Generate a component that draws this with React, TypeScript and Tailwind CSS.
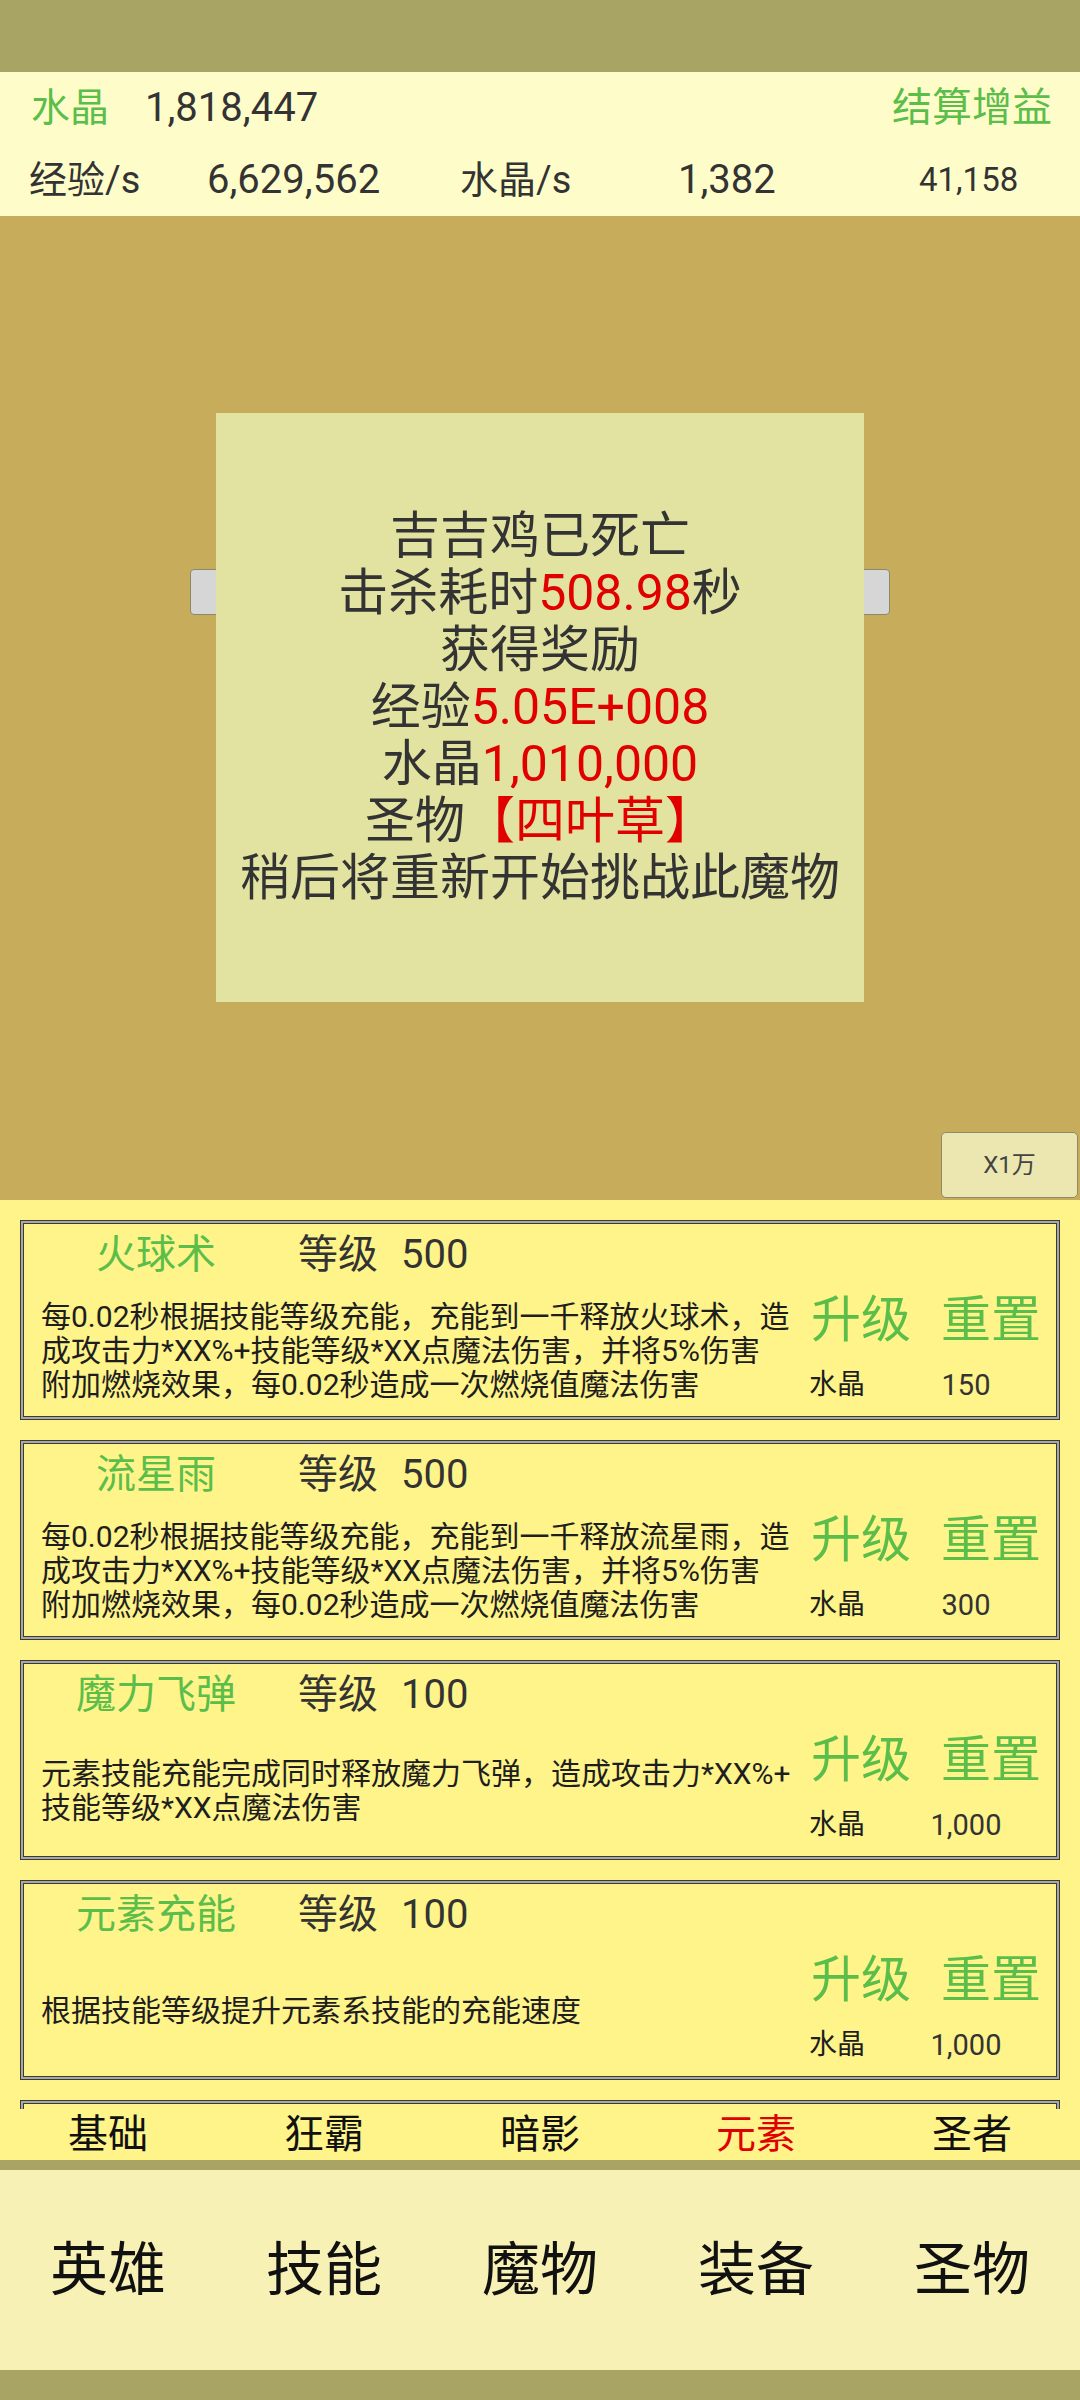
import React from 'react';

const FONT = { fontFamily: 'Roboto, "Noto Sans CJK SC", sans-serif' };

type Skill = {
  name: string;
  level: number;
  desc: string[];
  cost: string;
};

const SKILLS: Skill[] = [
  {
    name: '火球术',
    level: 500,
    desc: [
      '每0.02秒根据技能等级充能，充能到一千释放火球术，造',
      '成攻击力*XX%+技能等级*XX点魔法伤害，并将5%伤害',
      '附加燃烧效果，每0.02秒造成一次燃烧值魔法伤害',
    ],
    cost: '150',
  },
  {
    name: '流星雨',
    level: 500,
    desc: [
      '每0.02秒根据技能等级充能，充能到一千释放流星雨，造',
      '成攻击力*XX%+技能等级*XX点魔法伤害，并将5%伤害',
      '附加燃烧效果，每0.02秒造成一次燃烧值魔法伤害',
    ],
    cost: '300',
  },
  {
    name: '魔力飞弹',
    level: 100,
    desc: ['元素技能充能完成同时释放魔力飞弹，造成攻击力*XX%+', '技能等级*XX点魔法伤害'],
    cost: '1,000',
  },
  {
    name: '元素充能',
    level: 100,
    desc: ['根据技能等级提升元素系技能的充能速度'],
    cost: '1,000',
  },
];

const SUB_TABS = ['基础', '狂霸', '暗影', '元素', '圣者'];
const MAIN_TABS = ['英雄', '技能', '魔物', '装备', '圣物'];

const CardFrame = ({ children }: { children?: React.ReactNode }) => (
  <div className="h-[200px] border border-[#3a3a3a] bg-[#a9a9a2] p-[2px] shrink-0">
    <div className="h-full border border-[#3a3a3a] bg-[#fef48a] flex flex-col">{children}</div>
  </div>
);

const SkillCard = ({ skill }: { skill: Skill }) => (
  <CardFrame>
    {/* title row */}
    <div className="h-[62px] flex items-center">
      <span className="w-[264px] text-center text-[40px] leading-none text-[#5bbd4a]">{skill.name}</span>
      <span className="ml-[10px] text-[40px] leading-none text-[#333]">等级</span>
      <span className="ml-[23px] text-[40px] leading-none text-[#333]">{skill.level}</span>
    </div>
    {/* body */}
    <div className="flex-1 flex">
      <div className="w-[787px] pl-[17px] flex flex-col justify-center text-[30px] leading-[34px] text-[#1e1e1e]">
        {skill.desc.map((line) => (
          <div key={line} className="whitespace-nowrap">
            {line}
          </div>
        ))}
      </div>
      <div className="flex-1 flex flex-col">
        <div className="h-[68px] flex items-center">
          <span className="text-[50px] leading-none text-[#5bbd4a]">升级</span>
          <span className="ml-[30px] text-[50px] leading-none text-[#5bbd4a]">重置</span>
        </div>
        <div className="h-[62px] flex items-center">
          <span className="-ml-[2px] text-[28px] leading-none text-[#1e1e1e]">水晶</span>
          <span className="ml-[44px] w-[114px] text-center text-[29px] leading-none text-[#333]">{skill.cost}</span>
        </div>
      </div>
    </div>
  </CardFrame>
);

export default function App() {
  return (
    <div className="w-[1080px] h-[2400px] flex flex-col overflow-hidden" style={FONT}>
      {/* status strip */}
      <div className="h-[72px] bg-[#a8a463]" />

      {/* header */}
      <div className="h-[144px] bg-[#fefdca] flex flex-col text-[38px] text-[#333]">
        <div className="h-[72px] flex items-center pl-[31px] pr-[28px]">
          <span className="text-[39px] text-[#5bbd4a]">水晶</span>
          <span className="ml-[36px] text-[40px]">1,818,447</span>
          <span className="ml-auto text-[40px] text-[#5bbd4a]">结算增益</span>
        </div>
        <div className="h-[72px] flex items-center pl-[29px]">
          <span className="w-[178px]">经验/s</span>
          <span className="w-[253px] text-[40px]">6,629,562</span>
          <span className="w-[218px]">水晶/s</span>
          <span className="w-[241px] text-[40px]">1,382</span>
          <span className="text-[33px]">41,158</span>
        </div>
      </div>

      {/* battle scene */}
      <div className="relative h-[984px] bg-[#c7ad5b] flex flex-col items-center">
        {/* side tabs peeking from behind the dialog */}
        <div className="absolute left-[190px] top-[353px] w-[700px] h-[46px] rounded-[4px] border border-[#8c8a6a] bg-[#d6d6d6]" />
        <div className="relative mt-[197px] w-[648px] h-[589px] bg-[#e2e3a0] flex flex-col items-center justify-center text-[50px] leading-[57px] text-[#333]">
          <div>吉吉鸡已死亡</div>
          <div>
            击杀耗时<span className="text-[#e00000]">508.98</span>秒
          </div>
          <div>获得奖励</div>
          <div>
            经验<span className="text-[#e00000]">5.05E+008</span>
          </div>
          <div>
            水晶<span className="text-[#e00000]">1,010,000</span>
          </div>
          <div>
            圣物<span className="text-[#e00000]">【四叶草】</span>
          </div>
          <div>稍后将重新开始挑战此魔物</div>
        </div>
        <button className="absolute right-[2px] bottom-[2px] w-[137px] h-[66px] rounded-[5px] border border-[#8c8a6a] bg-[#ece6b0] text-[24px] text-[#444]">
          X1万
        </button>
      </div>

      {/* skill list */}
      <div className="h-[909px] bg-[#fef48a] overflow-hidden px-[20px] pt-[20px] flex flex-col gap-[20px]">
        {SKILLS.map((s) => (
          <SkillCard key={s.name} skill={s} />
        ))}
        {/* next card, scrolled out of view */}
        <CardFrame />
      </div>

      {/* sub tabs */}
      <div className="h-[51px] bg-[#fef48a] grid grid-cols-5 items-center text-[40px] leading-none text-[#111]">
        {SUB_TABS.map((t) => (
          <div key={t} className={`text-center ${t === '元素' ? 'text-[#e00000]' : ''}`}>
            {t}
          </div>
        ))}
      </div>
      <div className="h-[10px] bg-[#a8a463]" />

      {/* main nav */}
      <div className="h-[200px] bg-[#f7f1b5] grid grid-cols-5 items-center text-[58px] leading-none text-[#111]">
        {MAIN_TABS.map((t) => (
          <div key={t} className="text-center">
            {t}
          </div>
        ))}
      </div>
      <div className="flex-1 bg-[#a8a463]" />
    </div>
  );
}
